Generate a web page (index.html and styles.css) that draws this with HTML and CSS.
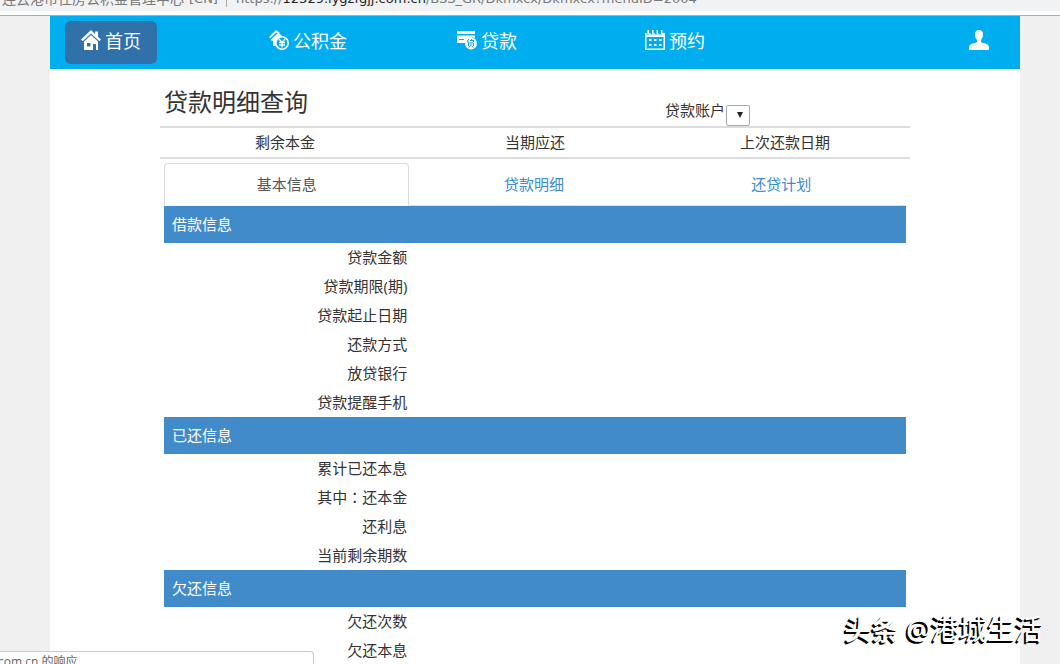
FILE: index.html
```html
<!DOCTYPE html>
<html lang="zh-CN">
<head>
<meta charset="utf-8">
<title>贷款明细查询</title>
<link rel="stylesheet" href="styles.css">
</head>
<body>
<div class="address-bar">
  <div class="address">
    <span class="site">连云港市住房公积金管理中心</span>
    <span class="country">[CN]</span>
    <span class="divider"></span>
    <span class="url">https://<span class="host">12329.lygzfgjj.com.cn</span>/BSS_GR/Dkmxcx/Dkmxcx?menuID=2004</span>
  </div>
</div>
<div class="page">
  <nav class="navbar">
    <a class="nav-item nav-home" href="#">
      <svg class="icon" viewBox="0 0 20 20"><path d="M10 0 0 9.500l1.600 1.700L10 3.400l8.400 7.800L20 9.500 17 6.700V1.500h-3v2.400z"/><path d="M10 5 3 11.500V20h9v-6h3v6h2v-8.500zM6 13h3.500v3.500H6z" fill-rule="evenodd"/></svg>
      <span>首页</span>
    </a>
    <a class="nav-item" href="#">
      <svg class="icon" viewBox="0 0 20 20"><path d="M0 7 7 0l4 3-1.500 1.200L7.200 2.500 1.300 8.200z"/><path d="M2 9.500 9 3l4 2.500-6 5V16H4v-5.500L2.800 11z"/><circle class="ring" cx="13" cy="13" r="6.200"/><path class="line" d="m10 9 3 3.500L16 9M10 12.500h6M10 15h6M13 12.500v5"/></svg>
      <span>公积金</span>
    </a>
    <a class="nav-item" href="#">
      <svg class="icon" viewBox="0 0 20 20"><path d="M0 1h18v3H0zM0 5.500h18V8a7.500 7.500 0 0 0-9.500 5H0zM2 9v1h5V9z" fill-rule="evenodd"/><circle cx="14" cy="13.500" r="6"/><path class="cut" d="m12 9-2 2.500M11 11v2M13 10.500h4M14 9l3 3M11.500 16v-3h5v3M14 14v1.500l-2.500 2M14.500 16l2 1.500"/></svg>
      <span>贷款</span>
    </a>
    <a class="nav-item" href="#">
      <svg class="icon" viewBox="0 0 20 20"><path d="M0 3h1.500v1.500h3V3h1v1.500h3V3h1v1.500h3V3h1v1.500h3V3H20v17H0zm1.500 4v11.500h17V7z" fill-rule="evenodd"/><path d="M2.500 0H4v4H2.500zM7 0h1.500v4H7zm4.500 0H13v4h-1.500zM16 0h1.500v4H16zM4 9h2.500v2H4zm5 0h2.500v2H9zm5 0h2.500v2H14zM4 14h2.500v2H4zm5 0h2.500v2H9zm5 0h2.500v2H14z"/></svg>
      <span>预约</span>
    </a>
    <a class="nav-user" href="#" aria-label="用户">
      <svg class="icon" viewBox="0 0 20 20"><path d="M10 0c2.700 0 4 1.700 4 4.500 0 2.500-.8 4-2 5.500v1.500c0 .7.500 1 1.500 1.300C18 13.800 20 15 20 17.500V20H0v-2.500c0-2.500 2-3.700 6.500-4.700 1-.3 1.500-.6 1.500-1.300V10C6.800 8.500 6 7 6 4.500 6 1.700 7.300 0 10 0z"/></svg>
    </a>
  </nav>
  <main class="content">
    <header class="title-row">
      <h1>贷款明细查询</h1>
      <div class="account">
        <label for="account">贷款账户</label>
        <span class="select-box"><select id="account"><option></option></select></span>
      </div>
    </header>
    <div class="summary"><span>剩余本金</span><span>当期应还</span><span>上次还款日期</span></div>
    <div class="details">
      <div class="tabs">
        <a class="tab active" href="#">基本信息</a>
        <a class="tab" href="#">贷款明细</a>
        <a class="tab" href="#">还贷计划</a>
      </div>
      <h2>借款信息</h2>
      <table>
        <tr><th scope="row">贷款金额</th><td></td></tr>
        <tr><th scope="row">贷款期限(期)</th><td></td></tr>
        <tr><th scope="row">贷款起止日期</th><td></td></tr>
        <tr><th scope="row">还款方式</th><td></td></tr>
        <tr><th scope="row">放贷银行</th><td></td></tr>
        <tr><th scope="row">贷款提醒手机</th><td></td></tr>
      </table>
      <h2>已还信息</h2>
      <table>
        <tr><th scope="row">累计已还本息</th><td></td></tr>
        <tr><th scope="row">其中<span class="colon" lang="zh-TW">：</span>还本金</th><td></td></tr>
        <tr><th scope="row">还利息</th><td></td></tr>
        <tr><th scope="row">当前剩余期数</th><td></td></tr>
      </table>
      <h2>欠还信息</h2>
      <table>
        <tr><th scope="row">欠还次数</th><td></td></tr>
        <tr><th scope="row">欠还本息</th><td></td></tr>
      </table>
    </div>
  </main>
</div>
<div class="status"><span>com.cn 的响应</span></div>
<div class="watermark"><b>头条</b> <span>@港城生活</span></div>
</body>
</html>
```
FILE: styles.css
```css
* { box-sizing: border-box; }
body {
  margin: 0;
  height: 100vh;
  overflow: hidden;
  display: flex;
  flex-direction: column;
  position: relative;
  background: #f0f0f0;
  color: #333;
  font: 400 15px/20px "Open Sans", "Noto Sans CJK SC", sans-serif;
}
a { text-decoration: none; }
.address-bar {
  flex: none;
  height: 16px;
  background: #f1f2f3;
  border-bottom: 1px solid #aaa;
  box-shadow: inset 0 -4px #fff;
  overflow: hidden;
  display: flex;
  align-items: flex-end;
  padding: 0 2px 6px;
}
.address {
  display: flex;
  align-items: center;
  white-space: nowrap;
  color: #777;
  font: 400 14px/20px "DejaVu Sans", "Noto Sans CJK SC", sans-serif;
}
.site { font-size: 14px; }
.country { margin-left: 5px; font-size: 13px; }
.divider { width: 1px; height: 16px; margin: 0 9px 0 8px; background: #aaa; }
.url { font-size: 13px; }
.host { color: #222; }
.page {
  flex: 1 0 auto;
  margin: 0 40px 0 50px;
  background: #fff;
}
.navbar {
  display: grid;
  grid-template-columns: repeat(4, 188px) 1fr;
  align-items: center;
  background: #00aeef;
  height: 53px;
  padding: 0 15px;
}
.nav-item {
  display: flex;
  align-items: center;
  justify-self: start;
  gap: 4px;
  height: 43px;
  padding: 0 16px 3px;
  color: #fff;
  font-size: 18px;
  border-radius: 6px;
}
.nav-home { background: #3071a9; }
.icon {
  flex: none;
  width: 20px;
  height: 20px;
  fill: #fff;
  margin-bottom: 2px;
}
.icon .line, .icon .ring, .icon .cut { fill: none; stroke: #fff; stroke-width: 1.3; }
.icon .ring { fill: #00aeef; stroke-width: 1.6; }
.icon .cut { stroke: #00aeef; stroke-width: 1; }
.nav-user {
  justify-self: end;
  display: flex;
  padding: 0 16px 3px;
}
.content {
  width: 100%;
  max-width: 750px;
  margin: 0 auto;
}
.title-row {
  display: flex;
  justify-content: space-between;
  height: 59px;
  padding: 16px 160px 0 4px;
  border-bottom: 2px solid #ddd;
}
h1 { margin: 0; font-size: 24px; font-weight: 400; line-height: 34px; }
.account { display: flex; align-items: flex-start; gap: 1px; padding-top: 15px; }
.select-box { position: relative; margin-top: 5px; display: flex; }
.select-box::after {
  content: "";
  position: absolute;
  right: 7px;
  top: 7px;
  border: 3px solid transparent;
  border-top: 6px solid #222;
  border-bottom: 0;
  pointer-events: none;
}
select {
  appearance: none;
  width: 24px;
  height: 21px;
  padding: 0;
  border: 1px solid #aaa;
  border-radius: 2px;
  background: #fff;
}
.summary {
  display: grid;
  grid-template-columns: repeat(3, 1fr);
  text-align: center;
  line-height: 29px;
  border-bottom: 2px solid #ddd;
}
.details { padding: 4px 4px 0; }
.tabs {
  display: grid;
  grid-template-columns: repeat(3, 1fr);
  border-bottom: 1px solid #ddd;
}
.tab {
  height: 43px;
  margin: 0 2px -1px 0;
  border: 1px solid transparent;
  border-radius: 4px 4px 0 0;
  text-align: center;
  line-height: 40px;
  color: #428bca;
}
.tab.active { color: #555; border-color: #ddd; border-bottom-color: #fff; background: #fff; }
h2 {
  margin: 0;
  padding: 0 8px;
  font-size: 15px;
  font-weight: 400;
  line-height: 37px;
  color: #fff;
  background: #428bca;
}
table { width: 100%; border-collapse: collapse; table-layout: fixed; }
th, td { height: 29px; padding: 0 4px; font-weight: 400; line-height: 29px; }
th { width: 33.333%; text-align: right; }
.colon { font-family: "Noto Sans CJK TC", sans-serif; line-height: 1; }
.status {
  position: absolute;
  left: 0;
  bottom: 0;
  width: 314px;
  height: 13px;
  overflow: hidden;
  border: 1px solid #ccc;
  border-width: 1px 1px 0 0;
  border-radius: 0 4px 0 0;
  background: #fff;
  color: #666;
  font-size: 12px;
}
.status span { margin-left: -2px; }
.watermark {
  position: absolute;
  right: 17px;
  bottom: 16px;
  color: #fff;
  font-size: 28px;
  line-height: 36px;
  white-space: nowrap;
  text-shadow: -1px 1px #000, -2px 2px #000;
}
.watermark b { font-size: 27px; }
```
